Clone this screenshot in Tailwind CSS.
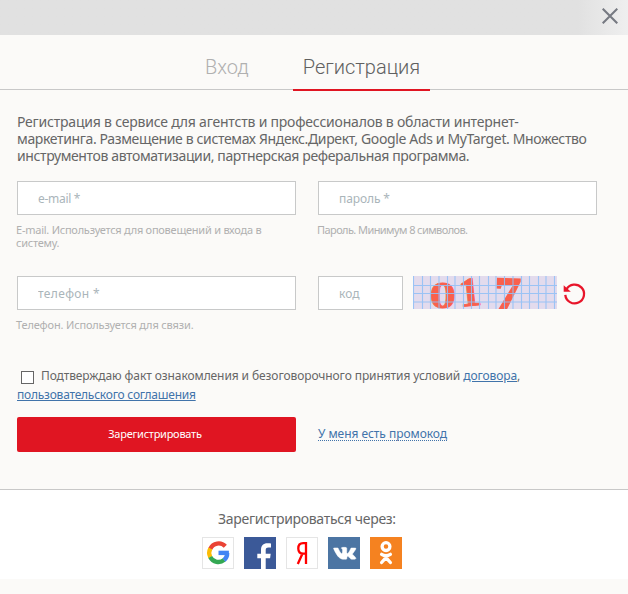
<!DOCTYPE html>
<html lang="ru">
<head>
    <meta charset="UTF-8" />
    <meta name="viewport" content="width=device-width, initial-scale=1.0" />
    <title>Регистрация</title>
    <script src="https://cdn.jsdelivr.net/npm/@tailwindcss/browser@4"></script>
</head>

<body class="bg-[#fbfaf8] font-['Noto_Sans',sans-serif] text-[#666] overflow-hidden">
    <!-- Top bar -->
    <div class="h-[35px] bg-linear-to-r from-[#e1e1e1] from-92% to-[#efefef] flex justify-end pt-2 pr-[10px]">
        <button class="size-4" aria-label="Закрыть">
            <svg class="size-4" viewBox="0 0 16 16" fill="none" stroke="#777a82" stroke-width="2.1"><path d="M.7.7l14.6 14.6M15.3.7L.7 15.3" /></svg>
        </button>
    </div>

    <!-- Tabs -->
    <nav class="h-[55px] border-b border-[#c8c8c8] flex font-[Roboto,sans-serif] text-[20px] font-light leading-[65px] whitespace-nowrap">
        <a class="w-[88px] ml-[205px] text-[#b0b0b0]">Вход</a>
        <a class="w-[137px] h-[56px] text-center text-[#606060] border-b-2 border-[#e01522]">Регистрация</a>
    </nav>

    <form class="pl-[17px] h-[399px]">
        <p class="pt-[23px] text-[14px] leading-[17px] whitespace-nowrap">
            <span class="block tracking-[-0.21px]">Регистрация в сервисе для агентств и профессионалов в области интернет-</span>
            <span class="block tracking-[-0.36px]">маркетинга. Размещение в системах Яндекс.Директ, Google Ads и MyTarget. Множество</span>
            <span class="block tracking-[-0.38px]">инструментов автоматизации, партнерская реферальная программа.</span>
        </p>

        <div class="mt-[17px] flex gap-[22px] h-[95px] text-[11px] leading-[13px] text-[#b0b0b0] whitespace-nowrap">
            <div class="w-[279px]">
                <input type="text" placeholder="e-mail *" class="block w-full h-[34px] border border-[#c8c9c9] bg-white pl-[20px] text-[12px] tracking-[-0.3px] placeholder:text-[#aab5ba]" />
                <p class="mt-[8px] -ml-px">
                    <span class="block tracking-[-0.24px]">E-mail. Используется для оповещений и входа в</span>
                    <span class="block tracking-[-0.25px]">систему.</span>
                </p>
            </div>
            <div class="w-[279px]">
                <input type="password" placeholder="пароль *" class="block w-full h-[34px] border border-[#c8c9c9] bg-white pl-[20px] text-[12px] tracking-[-0.1px] placeholder:text-[#aab5ba]" />
                <p class="mt-[8px] -ml-px tracking-[-0.58px]">Пароль. Минимум 8 символов.</p>
            </div>
        </div>

        <div class="flex gap-[22px] h-[90px] text-[11px] leading-[13px] text-[#b0b0b0] whitespace-nowrap">
            <div class="w-[279px]">
                <input type="text" placeholder="телефон *" class="block w-full h-[34px] border border-[#c8c9c9] bg-white pl-[20px] text-[12px] tracking-[0.35px] placeholder:text-[#aab5ba]" />
                <p class="mt-[8px] -ml-px tracking-[-0.16px]">Телефон. Используется для связи.</p>
            </div>
            <div class="flex items-start">
                <input type="text" placeholder="код" class="block w-[85px] h-[34px] border border-[#c8c9c9] bg-white pl-[20px] text-[12px] placeholder:text-[#aab5ba]" />
                <!-- Captcha -->
                <svg class="ml-[10px] w-[144px] h-[33px]" viewBox="0 0 144 33">
                    <rect width="144" height="33" fill="#e3dbed" />
                    <g fill="#f9604d" stroke="#f9604d" font-family="Liberation Serif, serif" font-weight="bold">
                        <text transform="translate(16.500 32) scale(1.400 1)" font-size="38" stroke-width=".8">0</text>
                        <text transform="translate(47 31) rotate(-6) scale(1.100 1)" font-size="41" stroke-width=".8">1</text>
                        <text transform="translate(81 33.500) rotate(2) scale(1.100 1)" font-size="47" stroke-width="2">7</text>
                    </g>
                    <path d="M.5 0v33M9.500 0v33M17.500 0v33M26 0v33M34.500 0v33M42 0v33M50.500 0v33M58.500 0v33M66.500 0v33M75.500 0v33M83 0v33M91.500 0v33M100 0v33M108.500 0v33M116.500 0v33M125.500 0v33M133 0v33M141.500 0v33M0 9.500h144M0 17.500h144M0 26h144" stroke="#92c0f5" stroke-width="1.1" stroke-opacity=".9" fill="none" />
                </svg>
                <svg class="ml-[6px] mt-[6px] size-[24px]" viewBox="0 0 24 24"><path d="M3.400 7.500A9.400 9.400 0 1 1 2.300 12.900" fill="none" stroke="#e8152a" stroke-width="2.300" /><path d="M.7 3.300v6.400h7.100z" fill="#e8152a" /></svg>
            </div>
        </div>

        <div class="text-[12px] leading-[19px] whitespace-nowrap h-[51px]">
            <label class="flex h-[19px]">
                <input type="checkbox" class="appearance-none ml-[4px] mt-[5px] mr-[7px] size-[13px] shrink-0 border border-[#666] bg-white" />
                <span class="tracking-[-0.09px]">Подтверждаю факт ознакомления и безоговорочного принятия условий <a class="text-[#4173aa] underline">договора</a>,</span>
            </label>
            <a class="text-[#4173aa] underline tracking-[-0.23px]">пользовательского соглашения</a>
        </div>

        <div class="flex items-center h-[35px]">
            <button type="button" class="w-[279px] h-[35px] rounded-[2px] bg-[#e01522] text-white text-[11px] tracking-[-0.25px] pr-[3px]">Зарегистрировать</button>
            <a class="ml-[22px] h-[14px] mb-[2px] leading-[14px] text-[12px] tracking-[-0.05px] text-[#4173aa] border-b border-dotted border-[#4173aa] whitespace-nowrap">У меня есть промокод</a>
        </div>
    </form>

    <!-- Social sign-up -->
    <div class="h-[90px] bg-white border-t border-[#c8c8c8] pt-[19px]">
        <p class="ml-[218px] text-[14px] leading-[20px] tracking-[-0.3px] whitespace-nowrap">Зарегистрироваться через:</p>
        <div class="mt-[8px] ml-[202px] flex gap-[10px]">
            <svg class="size-8 bg-white border border-[#e5e5e5]" viewBox="1 1 30 30">
                <g fill="none" stroke-width="4.300">
                    <path d="M23.300 9.300A9.200 9.200 0 0 0 8.300 11.800" stroke="#ea4335" />
                    <path d="M8.300 11.600A9.200 9.200 0 0 0 8.300 20.200" stroke="#fbbc05" />
                    <path d="M8.200 20A9.200 9.200 0 0 0 22.200 22.900" stroke="#34a853" />
                    <path d="M22 23.100A9 9 0 0 0 25.200 16" stroke="#4285f4" />
                </g>
                <path d="M16.500 13.700h10.400v4.400H16.500z" fill="#4285f4" />
            </svg>
            <svg class="size-8" viewBox="0 0 32 32"><path d="M0 0h32v32H0z" fill="#3b5998" /><path d="M17 32V21.200h-3.700v-4.400H17V13c0-4.300 2.200-6.700 6.500-6.700 1.500 0 2.700.1 3.500.2v4h-2.500c-2.300 0-2.800 1-2.800 2.700v3.600h5l-.6 4.400h-4.400V32z" fill="#fff" /></svg>
            <svg class="size-8 bg-white border border-[#e5e5e5]" viewBox="1 1 30 30"><path d="M20 27V6.200h-2.800c-3 0-4.900 2-4.900 5.300 0 3.300 1.900 5.200 4.900 5.200H20M16.400 16.700L11.800 27" fill="none" stroke="#f00" stroke-width="2.300" /></svg>
            <svg class="size-8" viewBox="0 0 32 32"><path d="M0 0h32v32H0z" fill="#4c75a3" /><path transform="translate(4.700 4.400) scale(.93)" d="M12.900 19.200h1.500s.4 0 .6-.3c.2-.2.2-.6.200-.6s0-1.900.9-2.200c.8-.3 1.900 1.800 3.100 2.600.9.600 1.500.5 1.500.5l3.200-.1s1.600-.1.900-1.400c-.1-.1-.4-.9-2.200-2.500-1.900-1.700-1.600-1.400.6-4.400 1.400-1.800 1.900-2.900 1.700-3.400-.2-.4-1.200-.3-1.200-.3h-3.500s-.3 0-.5.1c-.2.100-.3.400-.3.400s-.6 1.500-1.300 2.800c-1.600 2.700-2.200 2.800-2.500 2.600-.6-.4-.5-1.600-.5-2.400 0-2.600.4-3.700-.8-4-.4-.1-.7-.2-1.700-.2-1.300 0-2.400 0-3 .3-.4.2-.7.700-.5.700.2 0 .8.100 1 .5.4.5.4 1.700.4 1.700s.2 3.100-.5 3.500c-.5.300-1.200-.3-2.700-2.800C6.600 9 6 7.600 6 7.600s-.1-.3-.3-.4c-.3-.2-.6-.2-.6-.2H1.700s-.5 0-.7.200c-.2.200 0 .6 0 .6s2.600 6.200 5.600 9.200c2.800 2.900 6.300 2.200 6.300 2.200z" fill="#fff" stroke="#fff" stroke-width=".5" /></svg>
            <svg class="size-8" viewBox="0 0 32 32"><path d="M0 0h32v32H0z" fill="#f58220" /><g fill="none" stroke="#fff" stroke-width="3.300" stroke-linecap="round"><circle cx="16" cy="9.600" r="3.900" /><path d="M11.600 17.300c2.800 1.800 6 1.800 8.800 0M16 20.600l-4.400 4.900M16 20.600l4.400 4.900" /></g></svg>
        </div>
    </div>
</body>
</html>
